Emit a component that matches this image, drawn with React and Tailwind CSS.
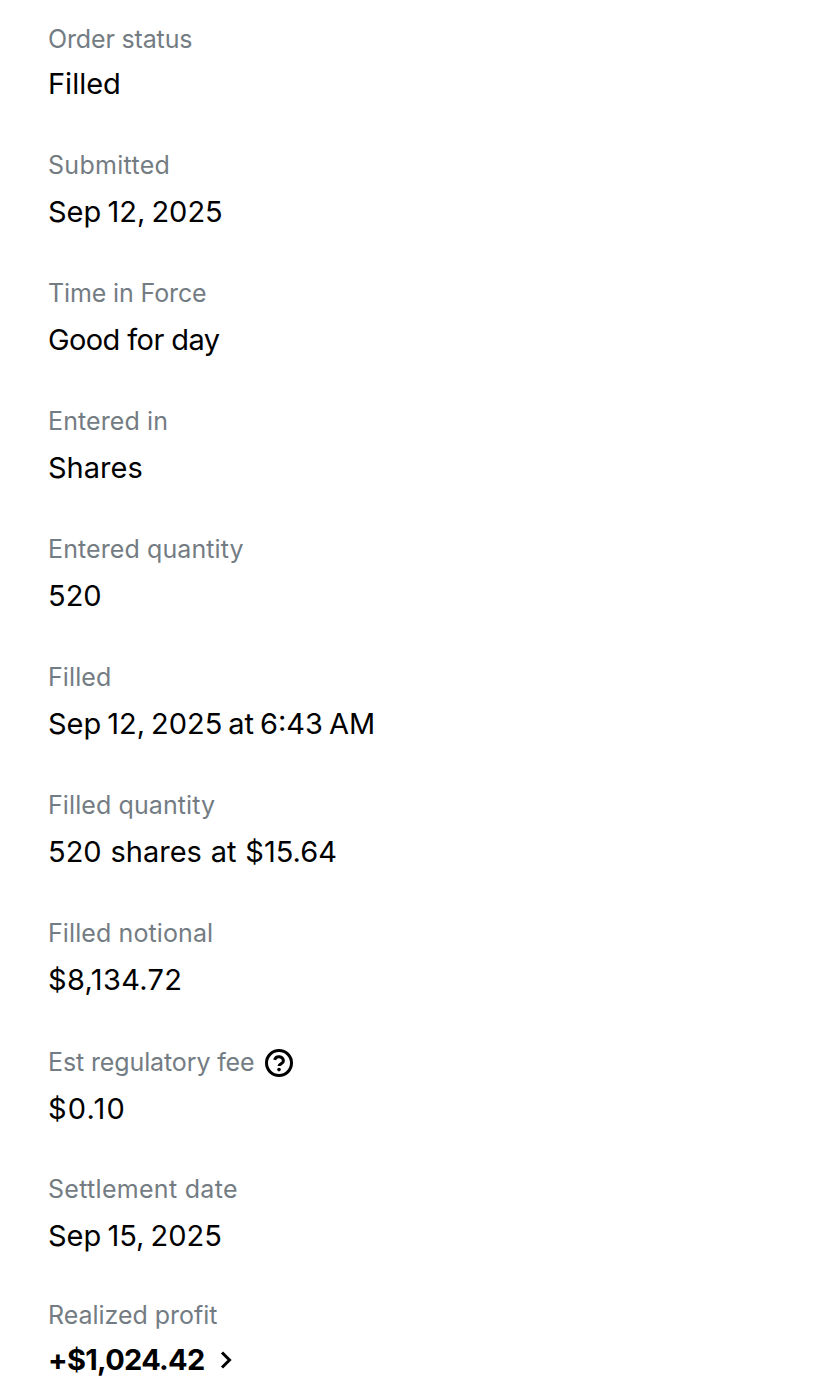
import React from 'react';

const rows = [
  { label: 'Order status', value: 'Filled', labelClass: 'h-[45px] tracking-[-0.15px]' },
  { label: 'Submitted', value: 'Sep 12, 2025', labelClass: 'h-[47px] tracking-[0.3px]' },
  { label: 'Time in Force', value: 'Good for day', labelClass: 'h-[47px] tracking-[-0.13px]', valueClass: 'tracking-[-0.6px]' },
  { label: 'Entered in', value: 'Shares' },
  { label: 'Entered quantity', value: '520' },
  { label: 'Filled', value: 'Sep 12, 2025 at 6:43 AM', valueClass: '[word-spacing:-2.2px]' },
  { label: 'Filled quantity', value: '520 shares at $15.64', valueClass: '[word-spacing:0.7px]' },
  { label: 'Filled notional', value: '$8,134.72', valueClass: 'tracking-[0.35px]' },
];

const QuestionIcon = () => (
  <svg width="30" height="30" viewBox="0 0 30 30" fill="none" stroke="#000" strokeWidth="3" className="ml-[9px] shrink-0">
    <circle cx="15" cy="15" r="12.5" />
    <path d="M10.6 11.9a4.5 4.5 0 0 1 8.8 1c0 2.9-4.4 3-4.4 5.2" />
    <circle cx="15" cy="21.6" r="1.8" fill="#000" stroke="none" />
  </svg>
);

const Row = ({ label, value, labelClass = 'h-[47px] tracking-[0.1px]', valueClass = '[word-spacing:-2px]', mb = 'mb-[33px]' }) => (
  <div className={mb}>
    <div className={`${labelClass} text-[25px] leading-[48px] text-[#747c83]`}>{label}</div>
    <div className={`${valueClass} h-[48px] text-[29px] leading-[48px] text-black`}>{value}</div>
  </div>
);

export default function App() {
  return (
    <div className="w-[828px] h-[1389px] overflow-hidden bg-white px-[48px] pt-[15px] font-['Inter',sans-serif]">
      {rows.map((row) => (
        <Row key={row.label} {...row} />
      ))}
      <div className="mb-[32px]">
        <div className="flex items-center h-[48px] pt-[4px] text-[25px] tracking-[-0.12px] text-[#747c83]">
          Est regulatory fee
          <QuestionIcon />
        </div>
        <div className="h-[48px] text-[29px] leading-[48px] tracking-[1.2px] text-black">$0.10</div>
      </div>
      <Row label="Settlement date" value="Sep 15, 2025" labelClass="h-[47px] tracking-[0.3px]" mb="mb-[31px]" />
      <div>
        <div className="h-[45px] text-[25px] leading-[48px] tracking-[-0.03px] text-[#747c83]">Realized profit</div>
        <div className="flex items-center h-[48px] text-[29px] font-bold tracking-[-0.7px] text-black">
          +$1,024.42
          <svg width="16" height="24" viewBox="0 0 16 24" fill="none" stroke="#000" strokeWidth="3" className="ml-[14px]">
            <path d="M3 4.5l7.5 7.5-7.5 7.5" />
          </svg>
        </div>
      </div>
    </div>
  );
}
